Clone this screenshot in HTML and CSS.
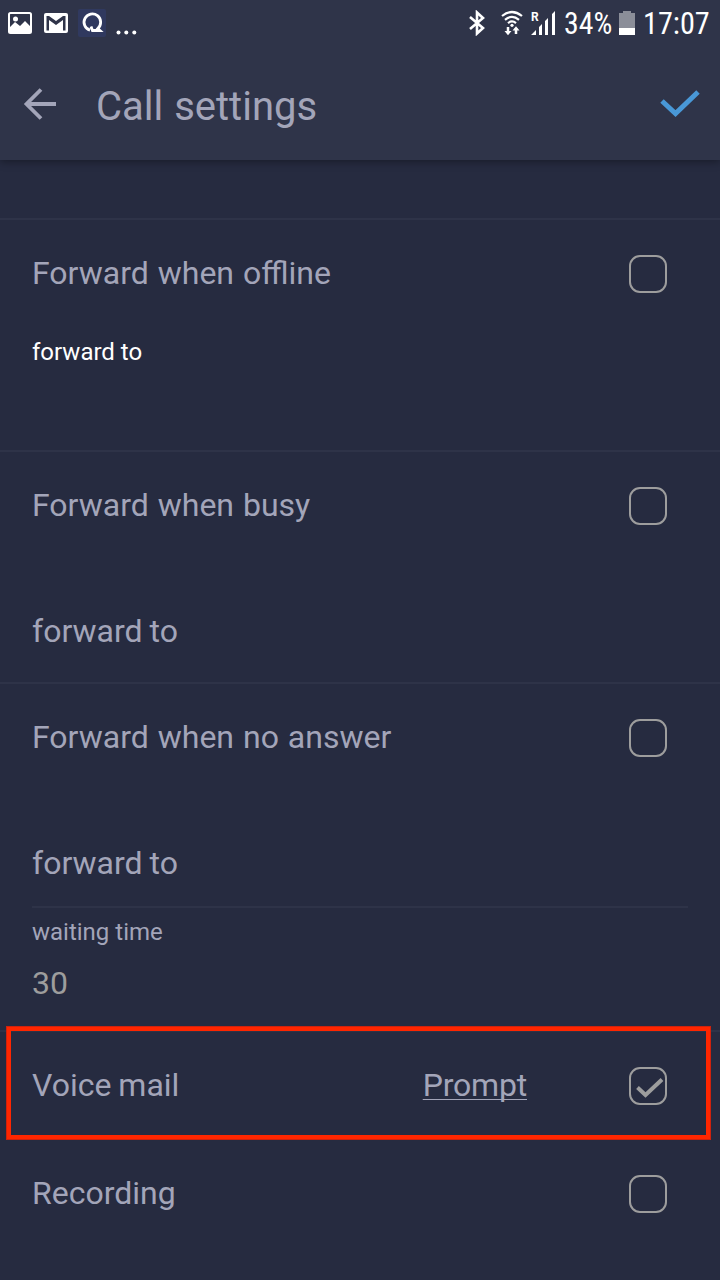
FILE: index.html
```html
<!DOCTYPE html>
<html lang="en">
<head>
<meta charset="utf-8">
<title>Call settings</title>
<link rel="stylesheet" href="styles.css">
</head>
<body>
<header class="header">
  <div class="status">
    <div class="status-left">
      <svg width="24" height="22" viewBox="0 0 24 22"><rect x="1" y="1" width="22" height="20" rx="1.5" fill="none" stroke="#fff" stroke-width="2"/><circle cx="7.5" cy="7" r="2.5" fill="#fff"/><path d="M2 20v-5l5-5 5 4 5-5 5 5v6z" fill="#fff"/></svg>
      <svg width="24" height="20" viewBox="0 0 24 20"><rect width="24" height="20" rx="2" fill="#fff"/><path d="M2.500 3h2.500L12 8l7-5h2.500v14.500H19V7L12 12 5 7v10.500H2.500z" fill="#2f3449"/></svg>
      <svg class="q-icon" width="28" height="28" viewBox="0 0 28 28"><rect width="28" height="28" rx="2" fill="#30395f"/><path d="M12 21.200A8.300 8.300 0 1 1 19.800 19.500L22 21.500H14.500L13 17.500" fill="none" stroke="#fff" stroke-width="2.800"/></svg>
      <svg class="dots" width="21" height="5" viewBox="0 0 21 5"><circle cx="2.500" cy="2.500" r="2"/><circle cx="10.300" cy="2.500" r="2"/><circle cx="18.300" cy="2.500" r="2"/></svg>
    </div>
    <div class="status-right">
      <svg class="bt" width="18" height="26" viewBox="0 0 18 26"><path d="M2 7l13 11-6 5.500V2.500l6 5.500L2 19" fill="none" stroke="#fff" stroke-width="2.600"/></svg>
      <svg class="wifi" width="22" height="26" viewBox="0 0 22 26"><g fill="none" stroke="#fff" stroke-width="2.200"><path d="M1 6q10-8 20 0M4 9.800q7-6 14 0M7 13.200q4-3.500 8 0"/><path d="M7 17v6M15 24v-6" stroke-width="2.500"/></g><circle cx="11" cy="15.300" r="1.600" fill="#fff"/><path d="M3.500 21h7L7 25.200zM11.500 20.500h7L15 16.300z" fill="#fff"/></svg>
      <div class="signal"><span class="roam">R</span><svg width="25" height="26" viewBox="0 0 25 26"><path d="M0 25l5-5v5zM8 17l3-3v11H8zM14 11l3-3v17h-3zM21 4l3-3v24h-3z" fill="#fff"/></svg></div>
      <span class="status-text percent">34%</span>
      <svg class="battery" width="16" height="24" viewBox="0 0 16 24"><path d="M0 2h4V0h8v2h4v15H0z" fill="#8b8e99"/><path d="M0 17h16v7H0z" fill="#fff"/></svg>
      <span class="status-text clock">17:07</span>
    </div>
  </div>
  <div class="toolbar">
    <svg class="back" width="34" height="34" viewBox="0 0 34 34"><path d="M33 17H4M18 2.500L3.500 17 18 31.500" fill="none" stroke="#a3a5b9" stroke-width="3.800"/></svg>
    <h1 class="title">Call settings</h1>
    <svg class="confirm" width="40" height="28" viewBox="0 0 40 28"><path d="M2 11l13.500 12.500L38 2" fill="none" stroke="#4998d7" stroke-width="5"/></svg>
  </div>
</header>
<main class="settings">
  <div class="spacer"></div>
  <section class="group">
    <div class="row"><span class="label">Forward when offline</span><span class="box"></span></div>
    <div class="active-label">forward to</div>
  </section>
  <section class="group">
    <div class="row"><span class="label">Forward when busy</span><span class="box"></span></div>
    <div class="field">forward to</div>
  </section>
  <section class="group group-tall">
    <div class="row"><span class="label">Forward when no answer</span><span class="box"></span></div>
    <div class="field">forward to</div>
    <div class="waiting"><div class="small-label">waiting time</div><div class="value">30</div></div>
  </section>
  <div class="row voice"><span class="label voice-label">Voice mail</span><a class="prompt">Prompt</a><span class="box"><svg width="28" height="20" viewBox="0 0 28 20"><path d="M1.500 9.500l8 7.500L26 1.500" fill="none" stroke="#9d9d9d" stroke-width="4"/></svg></span></div>
  <div class="row"><span class="label">Recording</span><span class="box"></span></div>
</main>
</body>
</html>
```
FILE: styles.css
```css
*, *::after { box-sizing: border-box; }
body { margin: 0; width: 720px; height: 1280px; overflow: hidden; background: #262b40; color: #a3a5b9; font-family: Roboto, sans-serif; }
svg { display: block; flex: none; }
.header { position: relative; height: 160px; background: #2f3449; box-shadow: 0 2px 8px rgba(0, 0, 0, .35); }
.status { height: 48px; display: flex; justify-content: space-between; padding: 0 10px 0 8px; color: #fff; }
.status-left, .status-right { display: flex; align-items: center; height: 46px; }
.status-left { gap: 12px; }
.q-icon { margin-left: -2px; }
.dots { fill: #fff; margin: 19px 0 0 -2px; }
.bt { margin-right: 15px; }
.wifi { margin-right: 8px; }
.signal { position: relative; margin-right: 8px; }
.roam { position: absolute; left: 0; top: 1px; font-size: 12px; line-height: 12px; font-weight: 700; }
.status-text { font-family: "Roboto Condensed", Roboto, sans-serif; font-size: 31px; line-height: 46px; white-space: nowrap; display: block; transform-origin: left; }
.percent { width: 48px; transform: translateY(1px) scaleX(.96); }
.battery { margin: 0 8px 0 7px; }
.clock { width: 67px; transform: translateY(1px) scaleX(.975); }
.toolbar { display: flex; align-items: center; height: 112px; padding: 0 20px 0 23px; }
.back { margin-right: 39px; }
.title { margin: 6px 0 0; font-size: 40px; line-height: 48px; font-weight: 400; flex: 1; word-spacing: 1px; }
.settings { font-size: 32px; }
.spacer { height: 60px; border-bottom: 2px solid #2e3348; }
.group { height: 232px; border-bottom: 2px solid #2e3348; }
.group-tall { height: 348px; }
.row { display: flex; align-items: center; height: 108px; padding: 0 53px 0 32px; }
.label { flex: 1; line-height: 40px; margin-top: -2px; word-spacing: 1px; }
.voice-label { word-spacing: -1px; }
.box { display: flex; width: 38px; height: 38px; border: 2px solid #9d9d9d; border-radius: 11px; }
.box svg { margin: 9px 0 0 5px; }
.active-label { padding: 8px 32px; font-size: 24px; line-height: 32px; color: #fff; }
.field { padding: 51px 32px 0; line-height: 40px; word-spacing: -1px; }
.waiting { margin: 23px 32px 0; border-top: 2px solid #2e3348; padding-top: 8px; }
.small-label { font-size: 24px; line-height: 32px; }
.value { color: #9d9d9d; line-height: 40px; margin-top: 15px; }
.voice { position: relative; }
.voice::after { content: ""; position: absolute; left: 6px; top: -6px; width: 705px; height: 114px; border: 5px solid #ff2600; outline: 1px solid rgba(160, 30, 25, .5); outline-offset: -1px; }
.prompt { line-height: 40px; margin: -2px 102px 0 0; text-decoration: underline; text-decoration-thickness: 1px; text-underline-offset: 3px; text-decoration-skip-ink: none; letter-spacing: -.2px; }
```
